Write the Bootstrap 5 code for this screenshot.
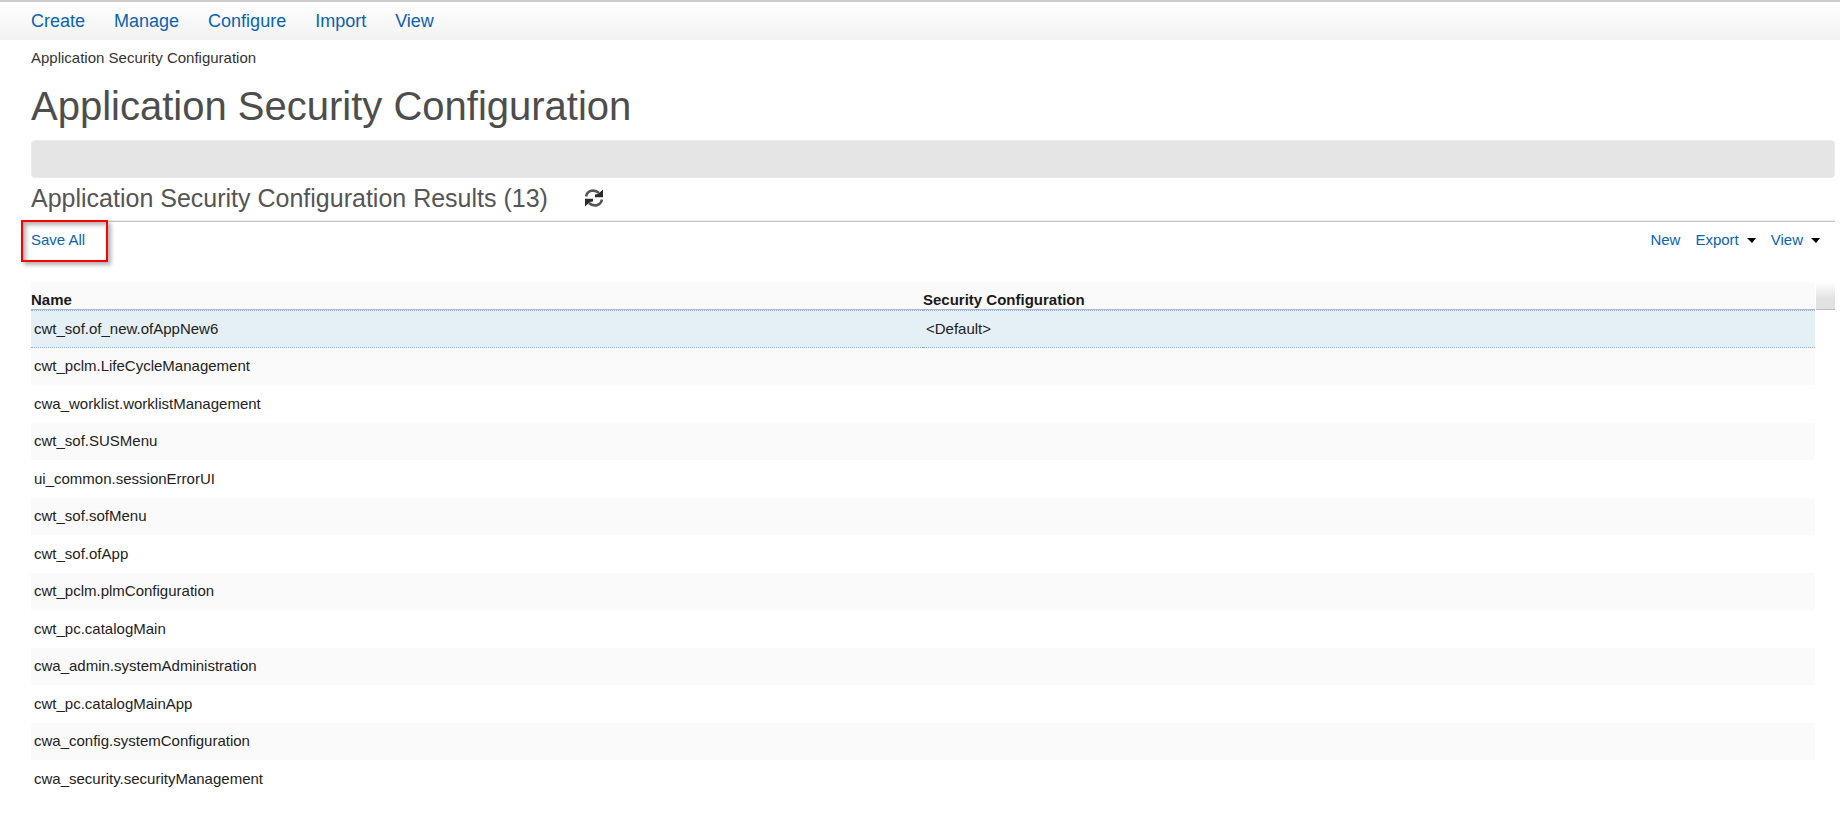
<!DOCTYPE html>
<html lang="en">
<head>
<meta charset="utf-8">
<meta name="viewport" content="width=device-width, initial-scale=1">
<title>Application Security Configuration</title>
<link href="https://cdn.jsdelivr.net/npm/bootstrap@5.3.0/dist/css/bootstrap.min.css" rel="stylesheet">
<style>
  body { font-family: "Liberation Sans", Arial, sans-serif; font-size: 15px; line-height: 20px; color: #222; background: #fff; }
  a, .tool-btn { color: #0a63b0; text-decoration: none; }
  .top-menu { border-top: 2px solid #ccc; background: linear-gradient(#fff, #f2f2f2); height: 40px; padding: 0 31px; }
  .top-menu ul { gap: 29px; }
  .top-menu a { font-size: 18px; line-height: 38px; }
  main { padding: 8px 5px 0 31px; }
  .crumbs { color: #333; }
  .page-title { font-size: 40px; line-height: 48px; color: #4d4d4d; margin: 14px 0 10px; }
  .filter-bar { height: 38px; background: #e5e5e5; border: 1px solid #ebebeb; border-radius: 4px; }
  .results-head { height: 44px; padding-bottom: 4px; gap: 37px; border-bottom: 1px solid #c4c4c4; box-shadow: inset 0 -1px #ececec; }
  .results-head h2 { font-size: 25px; line-height: 30px; color: #555; }
  .tool-row { height: 60px; }
  .tool-btn { border: 0; background: none; padding: 0; line-height: 20px; }
  .save-mark { border: 2px solid #f00; box-shadow: 3px 3px 4px rgba(0,0,0,.3), inset 3px 3px 4px rgba(0,0,0,.3); width: 87px; height: 42px; padding: 8px 0 0 8px; margin: -2px 0 0 -10px; background: #fff; text-align: left; }
  .tool-menu { gap: 15px; padding: 8px 15px 0 0; }
  .tool-menu .dropdown-toggle { display: flex; align-items: center; gap: 8px; }
  .tool-menu .dropdown-toggle::after { margin: 0; color: #000; border-top: 5px solid; border-left: 5px solid transparent; border-right: 4px solid transparent; }
  .app-table { table-layout: fixed; border-collapse: separate; border-spacing: 0; }
  .app-table th { height: 28px; padding: 9px 0 0; line-height: 18px; background: #fafafa; border-bottom: 1px solid #b0b8cc; color: #1a1a1a; }
  .app-table td { height: 38px; padding: 0 3px; vertical-align: middle; }
  .app-table tbody tr:nth-child(even) td { height: 37px; padding-bottom: 2px; background: #fafafa; }
  .app-table tr.picked td { background: #e5eff6; border-top: 1px dotted #8fb0ee; border-bottom: 1px dotted #8fb0ee; }
  .scroll-corner { width: 19px; height: 28px; margin-left: 1px; background: linear-gradient(#fff, #e2e2e2 60%); border-bottom: 1px solid #b8bcc8; }
</style>
</head>
<body>
<nav class="top-menu" aria-label="Main">
  <ul class="list-unstyled d-flex m-0">
    <li><a href="#">Create</a></li>
    <li><a href="#">Manage</a></li>
    <li><a href="#">Configure</a></li>
    <li><a href="#">Import</a></li>
    <li><a href="#">View</a></li>
  </ul>
</nav>
<main>
  <div class="crumbs">Application Security Configuration</div>
  <h1 class="page-title fw-normal">Application Security Configuration</h1>
  <div class="filter-bar"></div>
  <div class="results-head d-flex align-items-center">
    <h2 class="fw-normal m-0">Application Security Configuration Results (13)</h2>
    <button class="tool-btn d-flex" type="button" aria-label="Refresh">
      <svg width="18" height="18" viewBox="0 0 18 18" aria-hidden="true">
        <path d="M1 7.500C2.500 1 9.500 0 14 4" fill="none" stroke="#555" stroke-width="2.600"/>
        <path d="M18 .5V8.300H10V5.500L13 5z" fill="#2b2b2b"/>
        <path d="M17 10.500C15.500 17 8.500 18 4 14" fill="none" stroke="#555" stroke-width="2.600"/>
        <path d="M0 17.500V9.700H8V12.500L5 13z" fill="#2b2b2b"/>
      </svg>
    </button>
  </div>
  <div class="tool-row d-flex justify-content-between align-items-start">
    <button class="tool-btn save-mark d-flex align-items-start" type="button">Save All</button>
    <div class="tool-menu d-flex">
      <button class="tool-btn" type="button">New</button>
      <button class="tool-btn dropdown-toggle" type="button">Export</button>
      <button class="tool-btn dropdown-toggle" type="button">View</button>
    </div>
  </div>
  <div class="d-flex align-items-start">
    <table class="app-table w-100">
      <thead><tr><th scope="col">Name</th><th scope="col">Security Configuration</th></tr></thead>
      <tbody>
        <tr class="picked"><td>cwt_sof.of_new.ofAppNew6</td><td>&lt;Default&gt;</td></tr>
        <tr><td>cwt_pclm.LifeCycleManagement</td><td></td></tr>
        <tr><td>cwa_worklist.worklistManagement</td><td></td></tr>
        <tr><td>cwt_sof.SUSMenu</td><td></td></tr>
        <tr><td>ui_common.sessionErrorUI</td><td></td></tr>
        <tr><td>cwt_sof.sofMenu</td><td></td></tr>
        <tr><td>cwt_sof.ofApp</td><td></td></tr>
        <tr><td>cwt_pclm.plmConfiguration</td><td></td></tr>
        <tr><td>cwt_pc.catalogMain</td><td></td></tr>
        <tr><td>cwa_admin.systemAdministration</td><td></td></tr>
        <tr><td>cwt_pc.catalogMainApp</td><td></td></tr>
        <tr><td>cwa_config.systemConfiguration</td><td></td></tr>
        <tr><td>cwa_security.securityManagement</td><td></td></tr>
      </tbody>
    </table>
    <div class="scroll-corner flex-shrink-0"></div>
  </div>
</main>
<script src="https://cdn.jsdelivr.net/npm/bootstrap@5.3.0/dist/js/bootstrap.bundle.min.js"></script>
</body>
</html>
